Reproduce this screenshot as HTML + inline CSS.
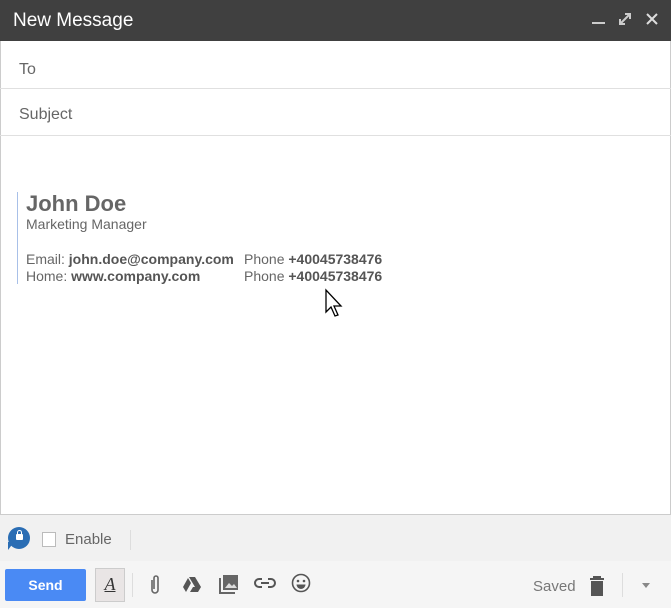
<!DOCTYPE html>
<html><head><style>
body{margin:0;width:671px;height:608px;overflow:hidden;background:#fff;font-family:"Liberation Sans",Arial,sans-serif;position:relative}
.abs{position:absolute}
.hdr{left:0;top:0;width:671px;height:41px;background:#404040;color:#fff;font-size:19px}
.line{height:1px;background:#e0e0e0;left:0;width:671px}
.lbl{font-size:16px;color:#666;left:19px}
.g{color:#666}
.b{color:#555;font-weight:bold}
</style></head><body>
<div class="abs hdr"><span class="abs" style="left:13px;top:10px">New Message</span>
<div class="abs" style="left:592px;top:22px;width:13px;height:2px;background:#ccc"></div>
<svg class="abs" style="left:618px;top:12px" width="14" height="14"><path d="M2 12L12 2M7 2h5v5M2 7v5h5" stroke="#ccc" stroke-width="2" fill="none"/></svg>
<svg class="abs" style="left:646px;top:13px" width="12" height="12"><path d="M1 1L11 11M11 1L1 11" stroke="#ddd" stroke-width="2"/></svg>
</div>
<div class="abs" style="left:0;top:41px;width:1px;height:567px;background:#ccc"></div>
<div class="abs" style="left:670px;top:41px;width:1px;height:567px;background:#ccc"></div>
<div class="abs lbl" style="top:61px">To</div>
<div class="abs line" style="top:88px"></div>
<div class="abs lbl" style="top:106px">Subject</div>
<div class="abs line" style="top:135px"></div>
<div class="abs" style="left:17px;top:192px;width:1px;height:92px;background:#a8c0e8"></div>
<div class="abs b" style="left:26px;top:191px;font-size:22px;color:#666">John Doe</div>
<div class="abs g" style="left:26px;top:216px;font-size:14px">Marketing Manager</div>
<div class="abs g" style="left:26px;top:251px;font-size:14px">Email: <span class="b">john.doe@company.com</span></div>
<div class="abs g" style="left:26px;top:268px;font-size:14px">Home: <span class="b">www.company.com</span></div>
<div class="abs g" style="left:244px;top:251px;font-size:14px">Phone <span class="b">+40045738476</span></div>
<div class="abs g" style="left:244px;top:268px;font-size:14px">Phone <span class="b">+40045738476</span></div>
<svg class="abs" style="left:324px;top:288px" width="20" height="34"><path d="M2 2L2 24L7 19L11 28L14 27L10 18L17 18Z" fill="#fff" stroke="#000" stroke-width="1.3"/></svg>
<div class="abs" style="left:0;top:514px;width:671px;height:46px;background:#f1f1f1;border-top:1px solid #ccc;border-bottom:1px solid #ccc"></div>
<div class="abs" style="left:8px;top:527px;width:22px;height:22px;border-radius:50%;background:#2a6db4"></div>
<div class="abs" style="left:8px;top:542px;width:0;height:0;border-left:6px solid #2a6db4;border-bottom:8px solid transparent"></div>
<div class="abs" style="left:16px;top:534px;width:7px;height:6px;background:#fff;border-radius:1px"></div>
<div class="abs" style="left:17px;top:530px;width:3px;height:4px;border:1px solid #fff;border-bottom:none;border-radius:3px 3px 0 0"></div>
<div class="abs" style="left:42px;top:532px;width:12px;height:13px;border:1px solid #bbb;background:#fff"></div>
<div class="abs" style="left:65px;top:531px;font-size:15px;color:#666">Enable</div>
<div class="abs" style="left:130px;top:530px;width:1px;height:20px;background:#ddd"></div>
<div class="abs" style="left:0;top:561px;width:671px;height:47px;background:#f5f5f5"></div>
<div class="abs" style="left:5px;top:569px;width:81px;height:32px;background:#4a8af4;border-radius:2px;color:#fff;font-weight:bold;font-size:14px;text-align:center;line-height:32px">Send</div>
<div class="abs" style="left:95px;top:568px;width:28px;height:32px;background:#e9e5e5;border:1px solid #ccc;font-family:'Liberation Serif',serif;font-style:italic;font-size:18px;text-align:center;line-height:30px;color:#333;text-decoration:underline">A</div>
<div class="abs" style="left:132px;top:573px;width:1px;height:24px;background:#ddd"></div>
<svg class="abs" style="left:148px;top:574px" width="14" height="22"><path d="M4 6v10a3 3 0 0 0 6 0V4a2 2 0 0 0-4 0v11" stroke="#666" stroke-width="1.6" fill="none"/></svg>
<svg class="abs" style="left:182px;top:576px" width="20" height="17"><path d="M7 1h6l6 10h-6zM6 2l3 5-5 9-3-5zM8 16l3-5h8l-3 5z" fill="#555"/></svg>
<svg class="abs" style="left:219px;top:574px" width="20" height="20"><path d="M1 4v15h15" stroke="#666" stroke-width="2" fill="none"/><rect x="4" y="1" width="15" height="15" fill="#666"/><path d="M6 14l4-5 3 3 2-2 3 4z" fill="#ddd"/></svg>
<svg class="abs" style="left:254px;top:577px" width="22" height="12"><path d="M8 2H5a4 4 0 0 0 0 8h3M14 2h3a4 4 0 0 1 0 8h-3M7 6h8" stroke="#555" stroke-width="2" fill="none"/></svg>
<svg class="abs" style="left:291px;top:573px" width="20" height="20"><circle cx="10" cy="10" r="8.5" stroke="#555" stroke-width="1.6" fill="none"/><circle cx="7" cy="8" r="1.3" fill="#555"/><circle cx="13" cy="8" r="1.3" fill="#555"/><path d="M5.5 11.5a4.5 4.5 0 0 0 9 0z" fill="#555"/></svg>
<div class="abs" style="left:533px;top:578px;font-size:15px;color:#777">Saved</div>
<svg class="abs" style="left:589px;top:576px" width="16" height="20"><path d="M1 3h14M5 3V1h6v2" stroke="#555" stroke-width="2" fill="none"/><rect x="2" y="5" width="12" height="15" fill="#555"/></svg>
<div class="abs" style="left:622px;top:573px;width:1px;height:24px;background:#ddd"></div>
<div class="abs" style="left:642px;top:583px;border-left:4px solid transparent;border-right:4px solid transparent;border-top:5px solid #888"></div>
</body></html>
